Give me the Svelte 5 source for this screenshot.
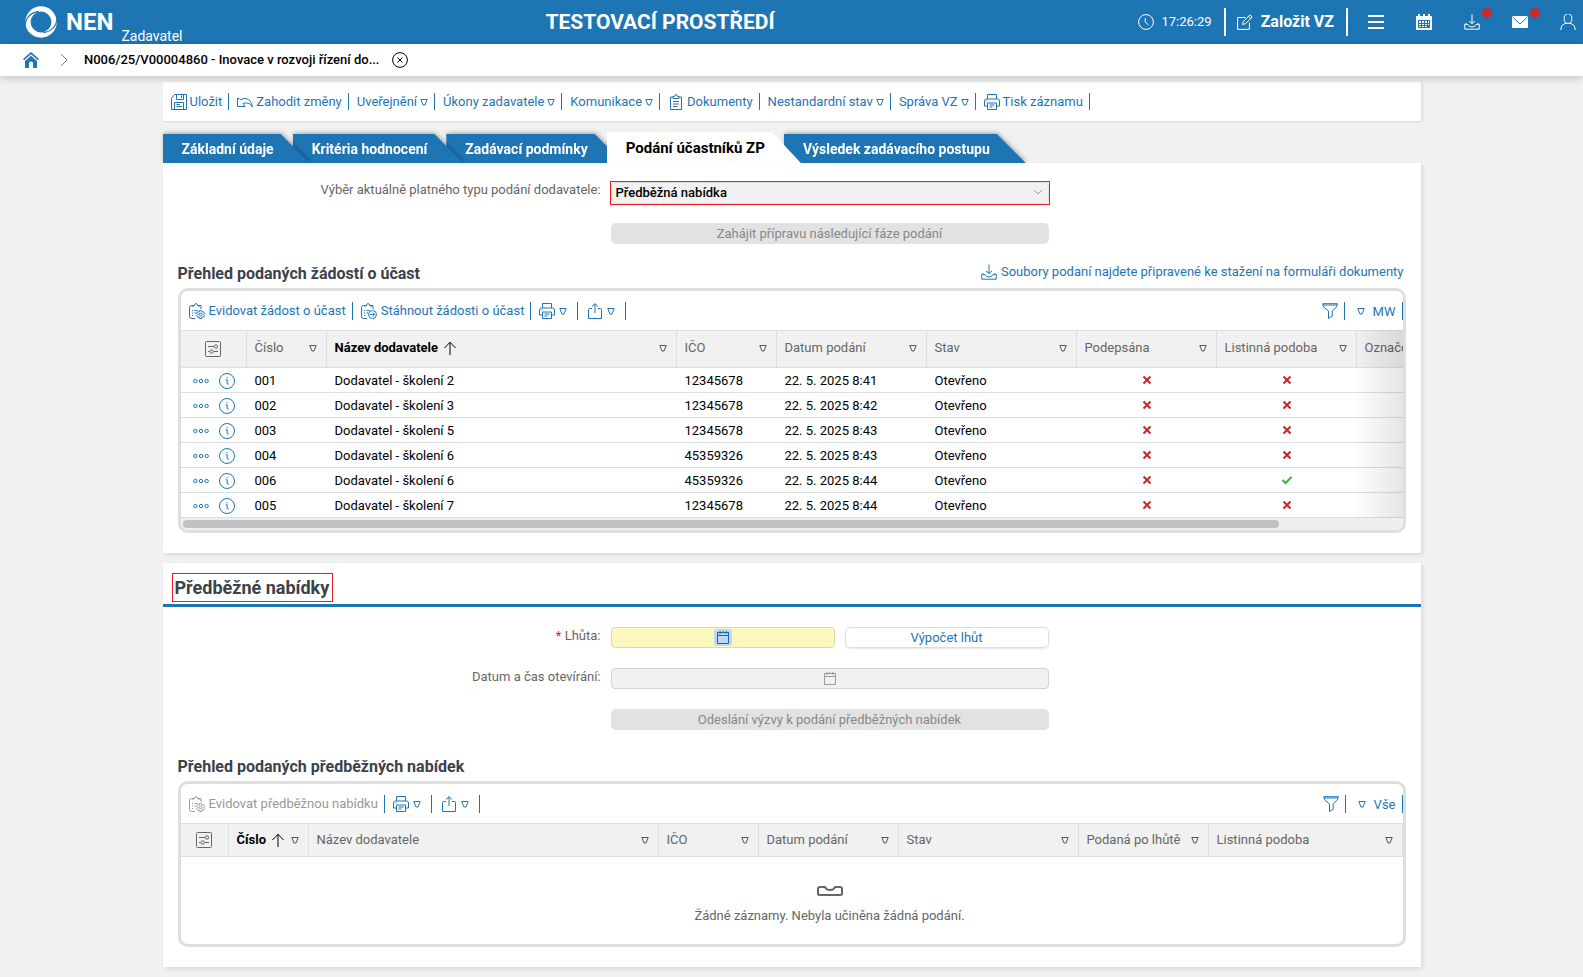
<script lang="ts">
  type Column = { label: string; width?: number; sorted?: boolean; menu?: boolean };

  const pageActions = [
    { label: 'Uložit', icon: 'save' },
    { label: 'Zahodit změny', icon: 'undo' },
    { label: 'Uveřejnění', menu: true },
    { label: 'Úkony zadavatele', menu: true },
    { label: 'Komunikace', menu: true },
    { label: 'Dokumenty', icon: 'clipboard' },
    { label: 'Nestandardní stav', menu: true },
    { label: 'Správa VZ', menu: true },
    { label: 'Tisk záznamu', icon: 'print' }
  ];

  const tabs = [
    'Základní údaje',
    'Kritéria hodnocení',
    'Zadávací podmínky',
    'Podání účastníků ZP',
    'Výsledek zadávacího postupu'
  ];
  let activeTab = $state(3);

  const requestColumns: Column[] = [
    { label: 'Číslo', width: 80, menu: true },
    { label: 'Název dodavatele', width: 350, sorted: true, menu: true },
    { label: 'IČO', width: 100, menu: true },
    { label: 'Datum podání', width: 150, menu: true },
    { label: 'Stav', width: 150, menu: true },
    { label: 'Podepsána', width: 140, menu: true },
    { label: 'Listinná podoba', width: 140, menu: true },
    { label: 'Označení', width: 180, menu: true }
  ];

  const requests = [
    { no: '001', name: 'Dodavatel - školení 2', ico: '12345678', date: '22. 5. 2025 8:41', paper: false },
    { no: '002', name: 'Dodavatel - školení 3', ico: '12345678', date: '22. 5. 2025 8:42', paper: false },
    { no: '003', name: 'Dodavatel - školení 5', ico: '12345678', date: '22. 5. 2025 8:43', paper: false },
    { no: '004', name: 'Dodavatel - školení 6', ico: '45359326', date: '22. 5. 2025 8:43', paper: false },
    { no: '006', name: 'Dodavatel - školení 6', ico: '45359326', date: '22. 5. 2025 8:44', paper: true },
    { no: '005', name: 'Dodavatel - školení 7', ico: '12345678', date: '22. 5. 2025 8:44', paper: false }
  ];

  const offerColumns: Column[] = [
    { label: 'Číslo', width: 80, sorted: true, menu: true },
    { label: 'Název dodavatele', width: 350, menu: true },
    { label: 'IČO', width: 100, menu: true },
    { label: 'Datum podání', width: 140, menu: true },
    { label: 'Stav', width: 180, menu: true },
    { label: 'Podaná po lhůtě', width: 130, menu: true },
    { label: 'Listinná podoba', menu: true }
  ];

  const clipboardBase =
    'M5 2.5H2.5Q.5 2.5.5 4.5V13.5Q.5 15.5 2.5 15.5H6M9.5 2.5H12V6M4 4V2.5H5.5Q5.5.6 7 .6T8.5 2.5H10V4M3 7.5H4M3 10H4M3 12.5H4M5.5 7.5H8.5M5.5 10H7';

  // outline icons on a 16px grid
  const icons: Record<string, string> = {
    save: 'M3.5.5H15.5V15.5H.5V4.5ZM5.5.5V5.5H12.5V.5M10.5 1.5V4M3.5 15.5V8.5H12.5V15.5M5.5 10.5H9M5.5 12.5H11',
    undo: 'M.5 4V12.5H8M.5 4.5H2L3.5 6Q6 4 9 4.5Q14.5 6 15.5 13Q13 8.5 9.5 9Q7.5 9 6 9.5L8 12.5',
    clipboard: 'M5 3H2.5V15.5H13.5V3H11M5 4.5V2.5H6.5Q6.5.6 8 .6T9.5 2.5H11V4.5ZM5 7.5H11M5 10H11M5 12.5H9.5',
    print: 'M3.5 5V.5H12.5V5M3.5 12H.5V7Q.5 5 2.5 5H13.5Q15.5 5 15.5 7V12H12.5M3.5 9H12.5V15.5H3.5ZM2.5 7H3.5M5.5 11H10.5M5.5 13H8.5',
    record: clipboardBase + 'M11.5 7.5L12.7 7.8L13 9L14.5 8.8L15.5 10.5L14.7 11.5L15.5 12.7L14.5 14.2L13 14L12.5 15.5H10.7L10.2 14L8.7 14.2L7.7 12.7L8.6 11.5L7.7 10.3L8.7 8.8L10.2 9L10.7 7.5ZM10.2 11.5A1.4 1.4 0 1 0 13 11.5A1.4 1.4 0 1 0 10.2 11.5',
    fetch: clipboardBase + 'M7.5 11.5A4 4 0 1 0 15.5 11.5A4 4 0 1 0 7.5 11.5M9 11.5H13.5M11.8 9.5L13.7 11.5L11.8 13.5',
    share: 'M5 5.5H2.5Q1.5 5.5 1.5 6.5V15.5H14.5V6.5Q14.5 5.5 13.5 5.5H11M8 10V.8M5 3.5L8 .7L11 3.5',
    funnel: 'M.5.7H15.5Q15.5 4 10.2 8V13.2L6.5 15.5V8Q.8 4.5.5.7ZM1 2H15',
    download: 'M8 .5V9.5M5 7L8 9.5L11 7M3 10H.8V15.2H15.2V10H13M2 10.5H4Q5 13 8 13T12 10.5H14',
    settings: 'M1.5.5H14.5Q15.5.5 15.5 1.5V14.5Q15.5 15.5 14.5 15.5H1.5Q.5 15.5.5 14.5V1.5Q.5.5 1.5.5ZM3 5.5H9M9.3 5.5A1.7 1.7 0 1 0 12.7 5.5A1.7 1.7 0 1 0 9.3 5.5M3 10.5H4.5M5 10.5A1.7 1.7 0 1 0 8.4 10.5A1.7 1.7 0 1 0 5 10.5M9 10.5H13',
    dots: 'M.7 8A1.7 1.7 0 1 0 4.1 8A1.7 1.7 0 1 0 .7 8M6.3 8A1.7 1.7 0 1 0 9.7 8A1.7 1.7 0 1 0 6.3 8M11.9 8A1.7 1.7 0 1 0 15.3 8A1.7 1.7 0 1 0 11.9 8',
    info: 'M.5 8A7.5 7.5 0 1 0 15.5 8A7.5 7.5 0 1 0 .5 8M6.7 6.8H8.2V10.5Q8.2 11.5 9.7 11M8 4V5.2',
    clock: 'M.6 8A7.4 7.4 0 1 0 15.4 8A7.4 7.4 0 1 0 .6 8M7.3 4V8L10.5 11',
    edit: 'M8.5 3.5H.6V15.4H12.4V8.5M5.5 10.5L6.3 7.5L13 .8L15.2 3L8.5 9.7ZM11.5 2.3L13.7 4.5',
    user: 'M4.2 4.7A3.9 4 0 1 0 11.8 4.7A3.9 4 0 1 0 4.2 4.7M.8 16Q.8 9.2 8 9.2T15.2 16',
    calendar: 'M2.5 2.5H13.5V13.5H2.5ZM2.5 5.5H13.5M5 1V4M8 1V3M11 1V4',
    sortUp: 'M8 15V2.5M2.5 8L8 2.2L13.5 8',
    close: 'M.6 8A7.4 7.4 0 1 0 15.4 8A7.4 7.4 0 1 0 .6 8M5.5 5.5L10.5 10.5M10.5 5.5L5.5 10.5',
    chevron: 'M5 2L11 8L5 14',
    down: 'M4 6L8 10L12 6'
  };
</script>

{#snippet icon(name: string)}
  <svg class="icon" viewBox="0 0 16 16" aria-hidden="true"><path d={icons[name]} /></svg>
{/snippet}

{#snippet caret()}
  <svg class="caret" viewBox="0 0 8 8" aria-hidden="true"><path d="M.8 1.5H7.2L5 7H3Z" /></svg>
{/snippet}

{#snippet flag(on: boolean)}
  {#if on}
    <svg class="mark yes" viewBox="0 0 12 10" role="img" aria-label="Ano"><path d="M1.5 5L4.5 8L10.5 2" /></svg>
  {:else}
    <svg class="mark no" viewBox="0 0 10 10" role="img" aria-label="Ne"><path d="M1.5 1.5L8.5 8.5M8.5 1.5L1.5 8.5" /></svg>
  {/if}
{/snippet}

{#snippet gridHead(columns: Column[])}
  <thead>
    <tr>
      <th class="tools"><button aria-label="Nastavení sloupců">{@render icon('settings')}</button></th>
      {#each columns as column}
        <th class:sorted={column.sorted}>
          <div class="head-cell">
            <span>{column.label}</span>
            {#if column.sorted}{@render icon('sortUp')}{/if}
            {#if column.menu}{@render caret()}{/if}
          </div>
        </th>
      {/each}
    </tr>
  </thead>
{/snippet}

{#snippet gridTools(view: string)}
  <button class="tool print" aria-label="Tisk">{@render icon('print')}{@render caret()}</button>
  <button class="tool export" aria-label="Export">{@render icon('share')}{@render caret()}</button>
  <span class="spacer"></span>
  <button class="tool" aria-label="Filtr">{@render icon('funnel')}</button>
  <button class="tool view">{@render caret()}<span>{view}</span></button>
{/snippet}

<header class="topbar">
  <a class="brand" href="#home">
    <svg class="logo" viewBox="0 0 32 32" aria-hidden="true">
      <circle cx="16" cy="16" r="12.3" />
      <path d="M1 21Q1 8 14 6M31 11Q31 24 18 26" />
    </svg>
    <span class="brand-name">NEN</span>
    <span class="brand-role">Zadavatel</span>
  </a>
  <div class="environment">TESTOVACÍ PROSTŘEDÍ</div>
  <div class="top-actions">
    <span class="time">{@render icon('clock')}17:26:29</span>
    <button class="create">{@render icon('edit')}Založit VZ</button>
    <div class="shortcuts">
      <button aria-label="Menu">
        <svg class="icon thick" viewBox="0 0 16 16"><path d="M0 2H16M0 8H16M0 14H16" /></svg>
      </button>
      <button aria-label="Kalendář">
        <svg class="icon solid" viewBox="0 0 16 16">
          <path fill-rule="evenodd" d="M0 2H2V0H4V2H7V0H9V2H12V0H14V2H16V16H0ZM2 6V14H14V6ZM3 7H5V9H3ZM6 7H8V9H6ZM9 7H11V9H9ZM12 7H13V9H12ZM3 10H5V11H3ZM6 10H8V11H6ZM9 10H11V11H9ZM12 10H13V11H12ZM3 12H5V13H3ZM6 12H8V13H6ZM9 12H11V13H9Z" />
        </svg>
      </button>
      <button aria-label="Stahování">{@render icon('download')}<span class="badge"></span></button>
      <button aria-label="Zprávy">
        <svg class="icon solid" viewBox="0 0 16 16">
          <rect y="2" width="16" height="12" rx="1" />
          <path class="fold" d="M.5 3L8 10L15.5 3" />
        </svg>
        <span class="badge"></span>
      </button>
      <button aria-label="Uživatel">{@render icon('user')}</button>
    </div>
  </div>
</header>

<nav class="crumbs" aria-label="Drobečková navigace">
  <a class="home" href="#home" aria-label="Domů">
    <svg class="icon solid" viewBox="0 0 16 16">
      <path d="M8 0L16 7L15 8.3L8 2.2L1 8.3L0 7ZM8 3.7L14 9V16H10V11Q10 9.5 8 9.5T6 11V16H2V9Z" />
    </svg>
  </a>
  <span class="crumb-next">{@render icon('chevron')}</span>
  <a class="crumb" href="#record">N006/25/V00004860 - Inovace v rozvoji řízení do...</a>
  <button class="crumb-close" aria-label="Zavřít">{@render icon('close')}</button>
</nav>

<main>
  <div class="toolbar page-toolbar">
    {#each pageActions as action}
      <button class="tool">
        {#if action.icon}{@render icon(action.icon)}{/if}
        <span>{action.label}</span>
        {#if action.menu}{@render caret()}{/if}
      </button>
    {/each}
  </div>

  <div class="tabs" role="tablist">
    {#each tabs as tab, i}
      <button
        role="tab"
        class="tab"
        class:active={i === activeTab}
        aria-selected={i === activeTab}
        style="z-index: {i === activeTab ? tabs.length + 1 : tabs.length - i}"
        onclick={() => (activeTab = i)}
      >{tab}</button>
    {/each}
  </div>

  <section class="panel requests">
    <div class="form">
      <label for="submission-type">Výběr aktuálně platného typu podání dodavatele:</label>
      <div class="select-box">
        <select id="submission-type">
          <option>Předběžná nabídka</option>
        </select>
        <span class="select-arrow">{@render icon('down')}</span>
      </div>
      <button class="wide" disabled>Zahájit přípravu následující fáze podání</button>
    </div>

    <div class="list-head">
      <h3>Přehled podaných žádostí o účast</h3>
      <a href="#documents">{@render icon('download')}Soubory podaní najdete připravené ke stažení na formuláři dokumenty</a>
    </div>

    <div class="grid">
      <div class="toolbar grid-toolbar">
        <button class="tool">{@render icon('record')}<span>Evidovat žádost o účast</span></button>
        <button class="tool">{@render icon('fetch')}<span>Stáhnout žádosti o účast</span></button>
        {@render gridTools('MW')}
      </div>
      <div class="scroller">
        <table class="wide-table">
          <colgroup>
            <col style="width: 66px" />
            {#each requestColumns as column}
              <col style="width: {column.width}px" />
            {/each}
          </colgroup>
          {@render gridHead(requestColumns)}
          <tbody>
            {#each requests as row}
              <tr>
                <td class="row-tools">
                  <button aria-label="Akce">{@render icon('dots')}</button>
                  <button aria-label="Detail">{@render icon('info')}</button>
                </td>
                <td>{row.no}</td>
                <td>{row.name}</td>
                <td>{row.ico}</td>
                <td>{row.date}</td>
                <td>Otevřeno</td>
                <td class="flag">{@render flag(false)}</td>
                <td class="flag">{@render flag(row.paper)}</td>
                <td></td>
              </tr>
            {/each}
          </tbody>
        </table>
      </div>
      <div class="scrollbar"><div class="thumb"></div></div>
    </div>
  </section>

  <section class="panel offers">
    <h2><span>Předběžné nabídky</span></h2>

    <div class="form">
      <label for="deadline"><span class="required">*</span> Lhůta:</label>
      <div class="deadline-row">
        <div class="date-field">
          <input id="deadline" type="text" class="needed" />
          <button class="pick focused" aria-label="Vybrat datum">{@render icon('calendar')}</button>
        </div>
        <button class="calc">Výpočet lhůt</button>
      </div>
      <label for="opening">Datum a čas otevírání:</label>
      <div class="date-field">
        <input id="opening" type="text" disabled />
        <button class="pick" aria-label="Vybrat datum a čas" disabled>{@render icon('calendar')}</button>
      </div>
      <button class="wide" disabled>Odeslání výzvy k podání předběžných nabídek</button>
    </div>

    <div class="list-head">
      <h3>Přehled podaných předběžných nabídek</h3>
    </div>

    <div class="grid">
      <div class="toolbar grid-toolbar">
        <button class="tool" disabled>{@render icon('record')}<span>Evidovat předběžnou nabídku</span></button>
        {@render gridTools('Vše')}
      </div>
      <table class="compact">
        <colgroup>
          <col style="width: 48px" />
          {#each offerColumns as column}
            <col style={column.width ? `width: ${column.width}px` : ''} />
          {/each}
        </colgroup>
        {@render gridHead(offerColumns)}
      </table>
      <div class="empty">
        <svg viewBox="0 0 26 10" aria-hidden="true">
          <path d="M3 1H8Q9 4 13 4T18 1H23Q25 1 25 3V7.5Q25 9 23 9H3Q1 9 1 7.5V3Q1 1 3 1Z" />
        </svg>
        <p>Žádné záznamy. Nebyla učiněna žádná podání.</p>
      </div>
    </div>
  </section>
</main>

<style>
  :global(body) {
    background: #f1f1f1;
    color: #000;
    font: 13px/16px Roboto, "Liberation Sans", sans-serif;
  }

  button,
  input,
  select {
    font: inherit;
    color: inherit;
    margin: 0;
    padding: 0;
    border: 0;
    background: none;
    box-sizing: border-box;
  }

  button { cursor: pointer; }
  button:disabled { cursor: default; }

  a {
    color: #1e75b4;
    text-decoration: none;
  }

  .icon {
    width: 16px;
    height: 16px;
    flex: none;
    display: block;
    fill: none;
    stroke: currentColor;
  }

  .icon.thick { stroke-width: 2; }

  .icon.solid {
    fill: currentColor;
    stroke: none;
  }

  .caret {
    width: 8px;
    height: 8px;
    flex: none;
    fill: none;
    stroke: currentColor;
  }

  /* top bar */
  .topbar {
    display: flex;
    align-items: center;
    justify-content: space-between;
    height: 44px;
    padding: 0 7px 0 24px;
    box-sizing: border-box;
    background: #1e75b4;
    color: #fff;
  }

  .brand {
    display: flex;
    align-items: center;
    height: 44px;
    color: #fff;
  }

  .logo {
    width: 34px;
    height: 34px;
    margin-right: 8px;
    fill: none;
    stroke: #fff;
    stroke-width: 5;
  }

  .logo path {
    stroke: #1e75b4;
    stroke-width: 1;
  }

  .brand-name {
    font-size: 24px;
    font-weight: 700;
  }

  .brand-role {
    align-self: flex-end;
    padding-left: 8px;
    font-size: 14px;
  }

  .environment {
    font-size: 21px;
    font-weight: 700;
  }

  .top-actions,
  .time,
  .create,
  .shortcuts {
    display: flex;
    align-items: center;
  }

  .time {
    gap: 8px;
    padding-right: 12px;
  }

  .create {
    gap: 8px;
    height: 28px;
    padding: 0 12px 0 11px;
    border: solid #fff;
    border-width: 0 2px;
    font-size: 16px;
    font-weight: 700;
  }

  .shortcuts {
    gap: 32px;
    padding-left: 20px;
  }

  .shortcuts button { position: relative; }

  .fold {
    fill: none;
    stroke: #1e75b4;
  }

  .badge {
    position: absolute;
    top: -6px;
    right: -12px;
    width: 10px;
    height: 10px;
    border-radius: 50%;
    background: #c92a2a;
  }

  /* breadcrumbs */
  .crumbs {
    position: relative;
    display: flex;
    align-items: center;
    height: 32px;
    padding-left: 23px;
    background: #fff;
    box-shadow: 0 2px 8px rgba(0, 0, 0, 0.2);
  }

  .crumb-next {
    margin: 0 12px 0 17px;
    color: #777;
  }

  .crumb {
    color: #000;
    font-weight: 500;
  }

  .crumb-close { margin-left: 13px; }

  /* page */
  main {
    max-width: 1258px;
    margin: 6px auto 10px;
  }

  .toolbar {
    display: flex;
    align-items: center;
    background: #fff;
    color: #1e75b4;
  }

  .page-toolbar {
    height: 39px;
    border-bottom: 1px solid #dcdee0;
    box-shadow: 2px 0 3px rgba(0, 0, 0, 0.08);
  }

  .tool {
    display: flex;
    align-items: center;
    gap: 4px;
    height: 17px;
    padding: 0 6px 0 8px;
    border-right: 1px solid #1e75b4;
    white-space: nowrap;
  }

  .page-toolbar .tool { gap: 3px; }

  .tool:disabled { color: #999; }

  .tabs {
    display: flex;
    align-items: flex-end;
    height: 31px;
    margin-top: 10px;
    isolation: isolate;
  }

  .tab {
    position: relative;
    height: 29px;
    padding: 0 19px;
    color: #fff;
    font-size: 14px;
    font-weight: 700;
    white-space: nowrap;
    filter: drop-shadow(1px -1px 2px rgba(0, 0, 0, 0.3));
  }

  .tab::before {
    content: "";
    position: absolute;
    inset: 0 -17px 0 0;
    z-index: -1;
    background: #1e75b4;
    clip-path: polygon(0 0, calc(100% - 29px) 0, 100% 100%, 0 100%);
  }

  .tab.active {
    height: 31px;
    color: #000;
    font-size: 15px;
    filter: none;
  }

  .tab.active::before { background: #fff; }

  .panel {
    position: relative;
    background: #fff;
    box-shadow: 2px 2px 4px rgba(0, 0, 0, 0.1);
  }

  .requests { padding: 18px 15px 20px; }

  .offers {
    margin-top: 10px;
    padding-bottom: 20px;
  }

  .offers .list-head,
  .offers .grid {
    margin-left: 15px;
    margin-right: 15px;
  }

  .offers h2 {
    margin: 0;
    padding: 10px 9px 2px;
    border-bottom: 3px solid #1e75b4;
    color: #3a424a;
    font-size: 18px;
    font-weight: 700;
    line-height: 27px;
  }

  .offers h2 span {
    display: inline-block;
    padding: 0 3px 0 2px;
    border: 1px solid #ed1c24;
  }

  .form {
    display: grid;
    grid-template-columns: minmax(0, 438px) minmax(0, 438px);
    column-gap: 10px;
    row-gap: 20px;
    align-items: start;
  }

  .requests .form {
    grid-template-columns: minmax(0, 423px) minmax(0, 438px);
    row-gap: 18px;
  }

  .offers .form { margin-top: 20px; }

  .form label {
    padding-top: 1px;
    color: #666;
    text-align: right;
  }

  .required { color: #c92a2a; }

  .select-box {
    position: relative;
    margin: 0 -1px;
    border: 1px solid #ed1c24;
  }

  .select-box select {
    display: block;
    width: 100%;
    height: 22px;
    padding-left: 4px;
    border: 1px solid #dcdee0;
    border-radius: 4px;
    background: #f1f1f1;
    font-weight: 500;
    appearance: none;
  }

  .select-arrow {
    position: absolute;
    top: 2px;
    right: 3px;
    color: #999;
    pointer-events: none;
  }

  .wide {
    grid-column: 2;
    height: 21px;
    border-radius: 5px;
    background: #e2e2e2;
    color: #888;
  }

  .deadline-row {
    display: grid;
    grid-template-columns: 224fr 204fr;
    gap: 10px;
  }

  .date-field {
    position: relative;
    height: 21px;
  }

  .date-field input {
    display: block;
    width: 100%;
    height: 21px;
    border: 1px solid #d4d4d4;
    border-radius: 4px;
    background: #f1f1f1;
  }

  .date-field .needed {
    border-color: #dfd8a4;
    background: #fff7c0;
  }

  .pick {
    position: absolute;
    inset: 2px 0;
    width: 18px;
    margin: 0 auto;
    padding: 1px;
    border-radius: 3px;
    color: #999;
  }

  .pick.focused {
    background: #bcd8f4;
    color: #1565b0;
  }

  .calc {
    height: 21px;
    border: 1px solid #dcdee0;
    border-radius: 5px;
    box-shadow: 0 1px 2px rgba(0, 0, 0, 0.1);
    color: #1e75b4;
  }

  /* record lists */
  .list-head {
    display: flex;
    justify-content: space-between;
    align-items: center;
    height: 24px;
    margin-top: 16px;
    margin-bottom: 4px;
  }

  .offers .list-head { margin-top: 23px; }

  .list-head h3 {
    margin: 0;
    padding-top: 4px;
    color: #3a424a;
    font-size: 16px;
    font-weight: 700;
  }

  .list-head a {
    display: flex;
    gap: 4px;
    padding-right: 2px;
  }

  .grid {
    border: 3px solid #dcdee0;
    border-radius: 10px;
    overflow: hidden;
  }

  .grid-toolbar { height: 39px; }

  .grid-toolbar .tool { height: 18px; }

  .grid-toolbar .tool.print { padding-right: 10px; }

  .grid-toolbar .tool.export { padding: 0 10px 0 9px; }

  .grid-toolbar .tool.view {
    gap: 8px;
    padding-left: 12px;
  }

  .view span { padding-top: 3px; }

  .spacer { flex: 1; }

  .scroller {
    position: relative;
    overflow: hidden;
  }

  .scroller::after {
    content: "";
    position: absolute;
    inset: 0 0 0 auto;
    width: 50px;
    background: linear-gradient(to right, rgba(0, 0, 0, 0), rgba(0, 0, 0, 0.1));
    pointer-events: none;
  }

  table {
    width: 100%;
    border-collapse: separate;
    border-spacing: 0;
    table-layout: fixed;
  }

  .wide-table { width: 1356px; }

  th {
    height: 34px;
    padding: 0 9px 2px 8px;
    border: solid #dcdee0;
    border-width: 1px 1px 1px 0;
    background: #f1f1f1;
    color: #666;
    font-weight: 400;
    text-align: left;
  }

  .compact th {
    height: 32px;
    padding-bottom: 0;
  }

  th.sorted {
    color: #000;
    font-weight: 700;
  }

  .head-cell {
    display: flex;
    align-items: center;
    gap: 4px;
    white-space: nowrap;
  }

  .head-cell .caret {
    margin-left: auto;
    color: #555;
  }

  th.tools { padding: 0; }

  .tools button {
    display: block;
    margin: 0 auto;
  }

  td {
    height: 23px;
    padding: 1px 8px 0;
    border-bottom: 1px solid #dcdee0;
    white-space: nowrap;
  }

  .row-tools {
    padding: 1px 0 0 12px;
    color: #1e75b4;
  }

  .row-tools button {
    float: left;
    margin-right: 10px;
  }

  .flag { text-align: center; }

  .mark {
    height: 10px;
    fill: none;
    stroke-width: 2;
  }

  .yes { stroke: #35b535; }
  .no { stroke: #cc2529; }

  .scrollbar {
    height: 12px;
    padding: 2px 2px 0;
    box-sizing: border-box;
    background: #efefef;
  }

  .thumb {
    width: 90%;
    height: 8px;
    border-radius: 4px;
    background: #c1c1c1;
  }

  .empty {
    display: flex;
    flex-direction: column;
    align-items: center;
    gap: 12px;
    padding: 29px 0 20px 76px;
    color: #666;
  }

  .empty svg {
    width: 26px;
    height: 10px;
    fill: none;
    stroke: currentColor;
    stroke-width: 2;
  }

  .empty p { margin: 0; }
</style>
